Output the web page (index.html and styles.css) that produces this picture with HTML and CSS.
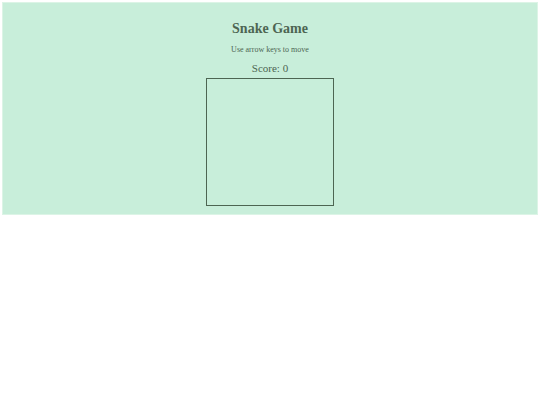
FILE: index.html
```html
<!DOCTYPE html>
<html lang="en">
<head>
    <meta charset="UTF-8">
    <meta name="viewport" content="width=device-width, initial-scale=1.0">
    <title>Snake Game</title>
    <link rel="stylesheet" href="styles.css">
</head>
<body>
    <div class="game">
        <h1>Snake Game</h1>
        <p class="hint">Use arrow keys to move</p>
        <p class="score">Score: <span id="score">0</span></p>
        <canvas id="board" width="126" height="126"></canvas>
    </div>
</body>
</html>
```

FILE: styles.css
```css
body {
    margin: 0;
    padding: 2px;
    font-family: "Liberation Serif", "Times New Roman", serif;
    color: #4d6552;
}
.game {
    background-color: #c8eeda;
    border: 1px solid #dcf4e6;
    text-align: center;
    padding: 17px 0 8px;
}
h1 {
    font-size: 14px;
    margin: 0;
    line-height: 17px;
}
.hint {
    font-size: 8px;
    margin: 7px 0 0;
    line-height: 12px;
}
.score {
    font-size: 11px;
    margin: 5px 0 0;
    line-height: 14px;
}
#board {
    display: block;
    margin: 3px auto 0;
    border: 1px solid #4d6552;
}
```
